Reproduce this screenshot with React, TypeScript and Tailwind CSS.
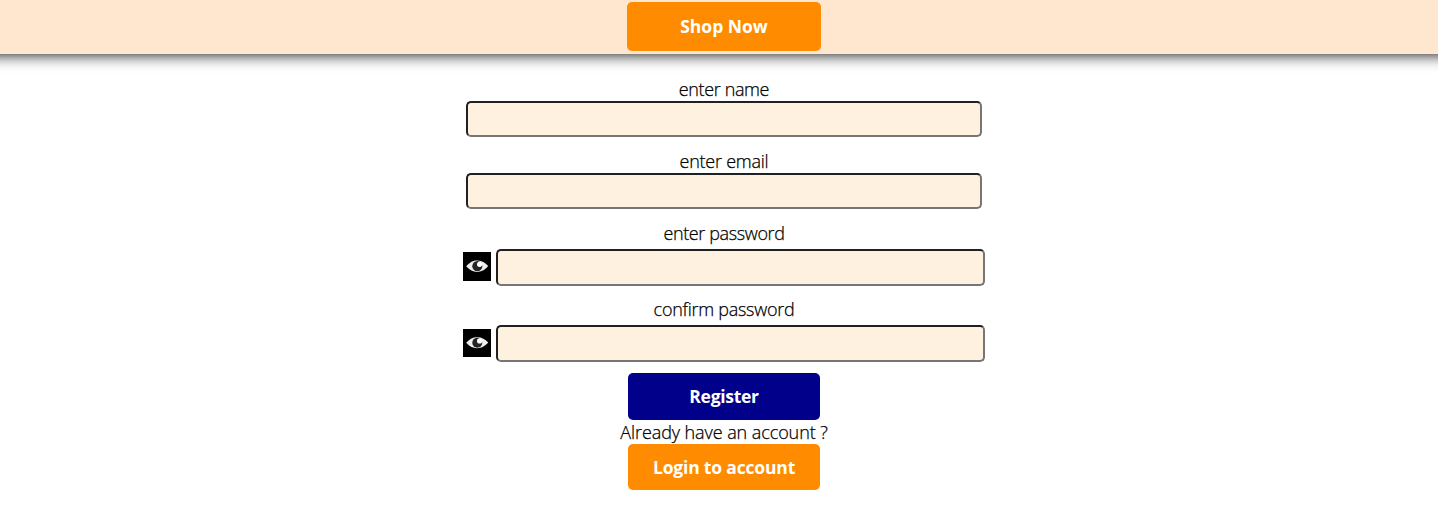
import React from "react";

function Eye() {
  return (
    <svg viewBox="0 0 28 28" preserveAspectRatio="none" className="block h-full w-full" aria-hidden="true">
      <rect width="28" height="28" fill="#000" />
      <g className="blur-[0.5px]">
        <path d="M3.2 13.8C7 9.8 9.6 8.2 14.3 8.2C19 8.2 22 10.2 25.2 13.6C21.5 17.6 18.5 19.2 14 19.2C9.8 19.2 6.8 17.6 3.2 13.8Z" fill="#eeeeee" />
        <circle cx="14.3" cy="13.7" r="5" fill="#242424" />
        <circle cx="16.6" cy="11.9" r="2.6" fill="#fff" />
      </g>
    </svg>
  );
}

const inputStyle =
  "block rounded-[5px] border-2 border-t-[#212121] border-l-[#212121] border-r-[#767676] border-b-[#767676] bg-[#fff1df] px-2 outline-none";

const textStroke = "[-webkit-text-stroke:0.25px_#000]";

type FieldProps = { label: string; tracking: string; className: string };

function TextField({ label, tracking, className }: FieldProps) {
  return (
    <label className={`flex flex-col items-center ${className}`}>
      <span className={`h-6 leading-6 ${textStroke} ${tracking}`}>{label}</span>
      <input className={`h-9 w-[516px] ${inputStyle}`} />
    </label>
  );
}

function PasswordField({ label, tracking, className, iconClass }: FieldProps & { iconClass: string }) {
  return (
    <div className={`flex flex-col items-center ${className}`}>
      <span className={`h-7 leading-6 ${textStroke} ${tracking}`}>{label}</span>
      <div className="flex items-start gap-[5px]">
        <button type="button" aria-label="Show password" className={`w-7 ${iconClass}`}>
          <Eye />
        </button>
        <input type="password" aria-label={label} className={`h-[37px] w-[489px] ${inputStyle}`} />
      </div>
    </div>
  );
}

export default function App() {
  return (
    <div className="h-[512px] overflow-hidden bg-white font-['Open_Sans','Noto_Sans',sans-serif] text-[18px] font-light text-black">
      <header className="-mx-5 flex h-[54px] justify-center bg-[#ffe6cf] pt-[2px] pl-[10px] shadow-[0_0_15px_#000]">
        <button className="h-[49px] w-[194px] rounded-[5px] bg-[#ff8c00] text-[17.5px] font-bold text-white">Shop Now</button>
      </header>
      <main className="flex flex-col items-center pt-[23px] pl-[10px]">
        <TextField label="enter name" tracking="tracking-[-0.38px]" className="" />
        <TextField label="enter email" tracking="tracking-[-0.25px]" className="mt-3" />
        <PasswordField label="enter password" tracking="tracking-[-0.38px]" className="mt-3" iconClass="mt-[3px] h-[29px]" />
        <PasswordField label="confirm password" tracking="tracking-[-0.27px]" className="mt-[11px]" iconClass="mt-1 h-7" />
        <button className="mt-[11px] h-[47px] w-[192px] rounded-[5px] bg-[#00008b] text-[17.5px] font-bold tracking-[-0.3px] text-white">Register</button>
        <p className={`h-6 leading-6 tracking-[-0.08px] ${textStroke}`}>Already have an account ?</p>
        <button className="h-[46px] w-[192px] rounded-[5px] bg-[#ff8c00] text-[17.5px] font-bold tracking-[-0.18px] text-white">Login to account</button>
      </main>
    </div>
  );
}
